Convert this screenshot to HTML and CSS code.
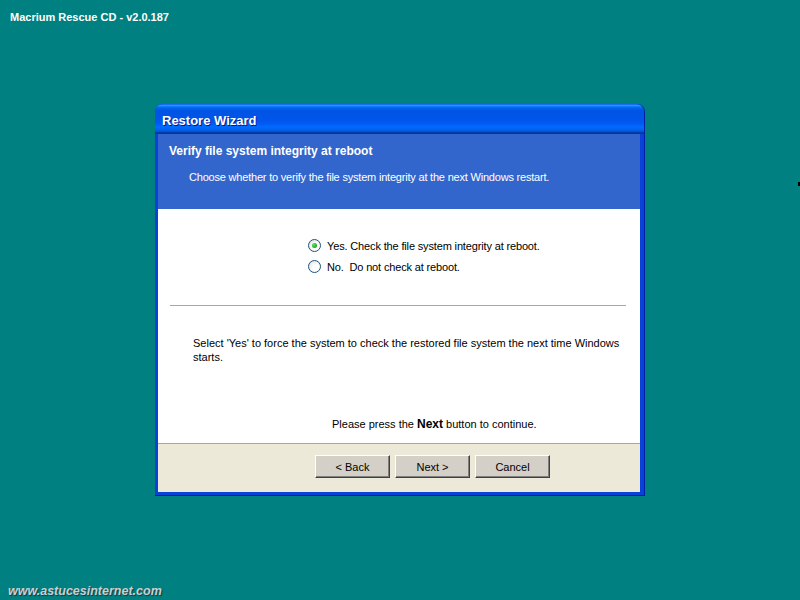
FILE: index.html
```html
<!DOCTYPE html>
<html lang="en">
<head>
    <meta charset="UTF-8">
    <title>Macrium Rescue CD - Restore Wizard</title>
    <link rel="stylesheet" href="styles.css">
</head>
<body>
    <div class="desktop">
        <div class="caption">Macrium Rescue CD - v2.0.187</div>

        <div class="window">
            <div class="titlebar">Restore Wizard</div>
            <div class="client">
                <div class="header">
                    <div class="header-title">Verify file system integrity at reboot</div>
                    <div class="header-sub">Choose whether to verify the file system integrity at the next Windows restart.</div>
                </div>

                <div class="content">
                    <div class="options">
                        <label class="option">
                            <span class="radio checked"></span>
                            <span>Yes. Check the file system integrity at reboot.</span>
                        </label>
                        <label class="option">
                            <span class="radio"></span>
                            <span>No.&nbsp; Do not check at reboot.</span>
                        </label>
                    </div>

                    <div class="divider"></div>

                    <p class="hint">Select 'Yes' to force the system to check the restored file system the next time Windows starts.</p>

                    <p class="continue">Please press the <b>Next</b> button to continue.</p>
                </div>

                <div class="footer">
                    <button class="btn">&lt; Back</button>
                    <button class="btn">Next &gt;</button>
                    <button class="btn">Cancel</button>
                </div>
            </div>
        </div>

        <div class="cursor"></div>
        <div class="watermark">www.astucesinternet.com</div>
    </div>
</body>
</html>
```

FILE: styles.css
```css
body {
    margin: 0;
    background-color: #008080;
    font-family: 'Liberation Sans', Arial, sans-serif;
    font-size: 11px;
}
.desktop {
    position: relative;
    height: 600px;
    display: flex;
    align-items: center;
    justify-content: center;
}
.caption {
    position: absolute;
    left: 10px;
    top: 11px;
    color: white;
    font-weight: bold;
    font-size: 11px;
}
.watermark {
    position: absolute;
    left: 8px;
    bottom: 2px;
    color: #c8d0d4;
    font-weight: bold;
    font-style: italic;
    font-size: 12.5px;
    text-shadow: 1px 1px 1px #1a3a3a;
}
.cursor {
    position: absolute;
    left: 798px;
    top: 182px;
    width: 2px;
    height: 4px;
    background-color: black;
}

/* window frame */
.window {
    width: 490px;
    background-color: #0842d8;
    border-radius: 8px 8px 0 0;
    padding: 0 4px 3px 3px;
    box-sizing: border-box;
    border-right: 1px solid #001ea0;
    border-bottom: 1px solid #001ea0;
}
.titlebar {
    height: 30px;
    margin: 0 -4px 0 -3px;
    padding-left: 7px;
    border-radius: 8px 8px 0 0;
    background: linear-gradient(#0058ee 0%, #3593ff 4%, #288eff 6%, #127dff 8%, #036ffc 10%, #0262ee 14%, #0057e5 20%, #0054e3 24%, #0055eb 56%, #005bf5 66%, #026afe 76%, #0062ef 86%, #0052d6 92%, #0040ab 94%, #003092 100%);
    color: white;
    font-weight: bold;
    font-size: 13px;
    line-height: 33px;
    text-shadow: 1px 1px #0a1883;
}
.client {
    background-color: white;
}

/* wizard header */
.header {
    height: 75px;
    background-color: #3366cc;
    color: white;
    box-sizing: border-box;
    padding-top: 10px;
}
.header-title {
    font-weight: bold;
    font-size: 12px;
    padding-left: 11px;
}
.header-sub {
    padding-left: 31px;
    margin-top: 13px;
    letter-spacing: -0.2px;
}

/* body */
.content {
    height: 234px;
    box-sizing: border-box;
    padding-top: 30px;
    color: black;
}
.options {
    padding-left: 150px;
    display: flex;
    flex-direction: column;
    gap: 8px;
    letter-spacing: -0.15px;
}
.option {
    display: flex;
    align-items: center;
    gap: 6px;
    height: 13px;
}
.radio {
    width: 11px;
    height: 11px;
    border: 1px solid #1c5180;
    border-radius: 50%;
    background: radial-gradient(circle at 65% 65%, #ffffff 30%, #dcdcd6 100%);
    position: relative;
}
.radio.checked::after {
    content: '';
    position: absolute;
    left: 3px;
    top: 3px;
    width: 5px;
    height: 5px;
    border-radius: 50%;
    background: radial-gradient(circle at 35% 35%, #65e665, #21a121 70%);
}
.divider {
    margin: 32px 14px 0 12px;
    border-top: 1px solid #aca899;
    border-bottom: 1px solid white;
}
.hint {
    margin: 29px 0 0 35px;
    width: 430px;
    line-height: 14px;
}
.continue {
    margin: 53px 0 0 174px;
}
.continue b {
    font-size: 12px;
}

/* buttons */
.footer {
    height: 49px;
    background-color: #ece9d8;
    border-top: 1px solid #aca899;
    box-sizing: border-box;
    display: flex;
    align-items: flex-start;
    gap: 5px;
    padding: 11px 0 0 157px;
}
.btn {
    width: 75px;
    height: 23px;
    background-color: #d4d0c8;
    border: 1px solid;
    border-color: #ffffff #404040 #404040 #ffffff;
    box-shadow: inset -1px -1px #808080;
    font-family: 'Liberation Sans', Arial, sans-serif;
    font-size: 11px;
    color: black;
    padding: 0;
}
```
